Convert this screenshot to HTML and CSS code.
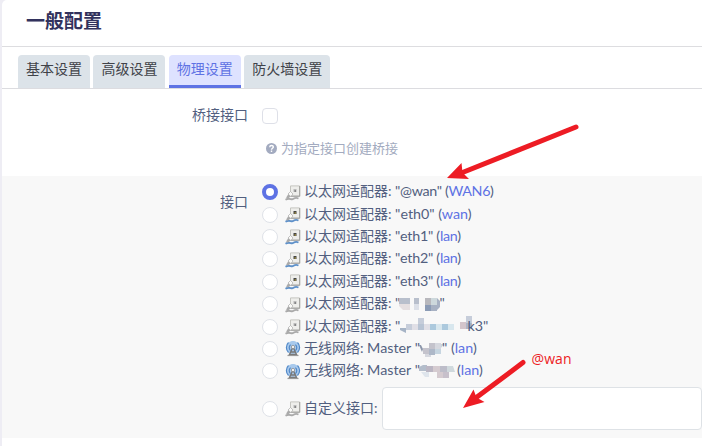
FILE: index.html
```
<!DOCTYPE html>
<html lang="zh-CN">
<head>
<meta charset="utf-8">
<title>一般配置</title>
<link rel="stylesheet" href="styles.css">
</head>
<body>
<svg width="0" height="0" class="defs">
  <symbol id="eth" viewBox="0 0 16 16">
    <path class="cable" d="M.5 14.800C5 12 6 15.500 8.500 13.800S12.500 13 13.500 13.500" fill="none" stroke-width="1.800"/>
    <path d="M5.500.9h9v10h-9z" fill="#eeeeeb" stroke="#c5c5c0"/>
    <path d="M14.800 1v10.300H6" fill="none" stroke="#999996" stroke-width=".9"/>
    <path d="M8.500 4h3v3h-3z" class="port"/>
    <path d="M9.500 5.500h1.500v1h-1.500z" class="pin"/>
    <path d="M5.500 6.500 8 9l-2.200 2.500L3 9z" fill="#fafaf8" stroke="#aaa" stroke-width=".7"/>
    <path d="M3.200 9.300 5.800 11.500 2.500 13.800 1.200 12.600z" fill="#aaa"/>
  </symbol>
  <symbol id="wifi" viewBox="0 0 16 16">
    <circle cx="8" cy="6.500" r="6.600" fill="#a8c9ec"/>
    <path d="M3.500 1.500a7 7 0 0 0 0 10M12.500 1.500a7 7 0 0 1 0 10M5.600 3.600a4 4 0 0 0 0 6M10.400 3.600a4 4 0 0 1 0 6" fill="none" stroke="#5289c8" stroke-width="1.200"/>
    <path d="M8 6 4 14.500M8 6l4 8.500M5.500 11h5M4.500 13.500h7" fill="none" stroke="#777" stroke-width="1.400"/>
    <path d="M2.500 14.500h11" stroke="#999" stroke-width="1.200"/>
    <circle cx="8" cy="6" r="1.700" fill="#eee" stroke="#777" stroke-width=".6"/>
  </symbol>
</svg>
<main class="card">
  <h1>一般配置</h1>
  <nav><a>基本设置</a><a>高级设置</a><a class="active">物理设置</a><a>防火墙设置</a></nav>
  <section class="bridge">
    <label>桥接接口</label>
    <div class="value">
      <span class="check"></span>
      <p class="hint"><svg width="11" height="11" viewBox="0 0 11 11"><circle cx="5.500" cy="5.500" r="5.500" fill="#a3abc0"/><path d="M3.700 4.200C3.800 1.800 7.400 2 7.300 4.100 7.200 5.200 5.500 5.300 5.500 6.700M5.500 7.500V9" fill="none" stroke="#fff" stroke-width="1.400"/></svg>为指定接口创建桥接</p>
    </div>
  </section>
  <section class="interfaces">
    <label>接口</label>
    <div class="list">
      <div class="row"><i class="radio on"></i><svg class="icon off"><use href="#eth"/></svg><span>以太网适配器: <b class="tight">"@wan" (<a>WAN6</a>)</b></span></div>
      <div class="row"><i class="radio"></i><svg class="icon"><use href="#eth"/></svg><span>以太网适配器: <b>"eth0" (<a>wan</a>)</b></span></div>
      <div class="row"><i class="radio"></i><svg class="icon"><use href="#eth"/></svg><span>以太网适配器: <b class="lan">"eth1" (<a>lan</a>)</b></span></div>
      <div class="row"><i class="radio"></i><svg class="icon"><use href="#eth"/></svg><span>以太网适配器: <b class="lan">"eth2" (<a>lan</a>)</b></span></div>
      <div class="row"><i class="radio"></i><svg class="icon"><use href="#eth"/></svg><span>以太网适配器: <b class="lan">"eth3" (<a>lan</a>)</b></span></div>
      <div class="row"><i class="radio"></i><svg class="icon off"><use href="#eth"/></svg><span>以太网适配器: <b>"</b></span><svg class="mosaic m0" width="41" height="14"><path fill="#e5dfe1" d="M0 0h11v12H4L0 8z"/><path fill="#b8bfcc" d="M0 0h11v6H0zM15 0h5v6h-5z"/><path fill="#dce0e8" d="M15 6h5v6h-5z"/><path fill="#b8b8bd" d="M26 0h6v7h-6z"/><path fill="#cdd8dc" d="M32 0h6v7h-6z"/><path fill="#8b9bb5" d="M26 7h6v6h-6z"/><path fill="#a7b1c3" d="M32 7h6v6h-6zM38 0l3 3v6l-3 3z"/></svg><b>"</b></div>
      <div class="row"><i class="radio"></i><svg class="icon off"><use href="#eth"/></svg><span>以太网适配器: <b>"</b></span><svg class="mosaic wide" width="75" height="17"><path fill="#a6b4c6" d="M0 12h6v5l-6-3z"/><path fill="#c6cdda" d="M6 8h6v6H6zM18 2h6v6h-6zM66 0h6v7h-6z"/><path fill="#e0dfe6" d="M12 8h6v6h-6zM24 8h6v6h-6z"/><path fill="#b8c4d4" d="M18 8h6v6h-6z"/><path fill="#acc9dd" d="M30 8h6v6h-6zM42 8h6v6h-6z"/><path fill="#d8e7ee" d="M36 8h6v6h-6zM48 8h6v6h-6z"/><path fill="#d3c5cb" d="M60 6h6v7h-6z"/><path fill="#acb4c6" d="M66 7h6v6h-6z"/></svg><b>k3"</b></div>
      <div class="row"><i class="radio"></i><svg class="icon"><use href="#wifi"/></svg><span>无线网络: <b class="master">Master "</b></span><svg class="mosaic m1" width="26" height="16"><path fill="#8c96aa" d="m0 4 3 7 1-3-2-4z"/><path fill="#c4c3cc" d="M4 7h6v6H4zM10 2h6v6h-6z"/><path fill="#d6d8df" d="M16 2h6v6h-6zM6 13h6v3H6z"/><path fill="#aeb8c8" d="M10 8h6v6h-6z"/><path fill="#c6d5e0" d="M16 8h6v5h-6zM22 3h3l-3 4z"/></svg><b>" (<a>lan</a>)</b></div>
      <div class="row"><i class="radio"></i><svg class="icon"><use href="#wifi"/></svg><span>无线网络: <b class="master">Master "</b></span><svg class="mosaic m2" width="36" height="14"><path fill="#b3bdcb" d="M0 2 4 0h4v6H0z"/><path fill="#dfe5ec" d="M2 7h8v5H6z"/><path fill="#bbb6c3" d="M7 1h7v6H7z"/><path fill="#d5cbd0" d="M14 1h7v6h-7zM18 7h6v6h-6z"/><path fill="#bdbdc9" d="M21 1h7v6h-7z"/><path fill="#d0d9dd" d="M28 1h6l2 6h-8z"/><path fill="#c7c0cb" d="M24 7h6v6h-6z"/></svg><b>(<a>lan</a>)</b></div>
      <div class="row custom"><i class="radio"></i><svg class="icon off"><use href="#eth"/></svg><span>自定义接口:</span><input type="text" aria-label="自定义接口"></div>
    </div>
  </section>
</main>
<svg class="notes" width="702" height="446" viewBox="0 0 702 446">
  <path d="M576 127 460 173.500M523 362.500 475 398.500" stroke="#ed1c24" stroke-width="5" stroke-linecap="round"/>
  <path d="m447 178 14.500-15 1 9.500 6.500 6.500zM463 408l10.500-18.500 3 8 8 4.500z" fill="#ed1c24"/>
  <text x="531.500" y="363.500" textLength="40">@wan</text>
</svg>
</body>
</html>
```
FILE: styles.css
```
* { box-sizing: border-box; }
body { margin: 0; width: 702px; height: 446px; overflow: hidden; background: #eeedf4; color: #525f7f; font: 14px/22px Lato, "Noto Sans CJK SC", sans-serif; }
.defs { display: block; }
.card { margin-left: 2px; height: 446px; background: #fff; border-radius: 5px 0 0; }
h1 { margin: 0; height: 47px; padding: 8px 24px 0; border-bottom: 1px solid #dddde0; color: #32325d; font: bold 19px/24px "Noto Sans CJK SC", sans-serif; }
nav { display: flex; height: 42px; padding: 8px 16px 0; gap: 3.400px; border-bottom: 1px solid #dcdce0; }
nav a { height: 33px; padding: 3px 8px 0; border-radius: 4px 4px 0 0; background: #dce3e9; color: #404248; }
nav a.active { background: #dee2ff; color: #5e72e4; border-bottom: 3px solid #5e72e4; border-radius: 4px 4px 0 0; }
section { display: flex; }
label { width: 246px; text-align: right; flex: none; }
.bridge { height: 87px; padding-top: 15px; }
.value { padding: 4px 0 0 14px; }
.check { display: block; width: 16px; height: 16px; border: 1px solid #dee0e8; border-radius: 4px; }
.hint { display: flex; align-items: center; gap: 4px; margin: 13px 0 0 4px; color: #a3abc0; font-size: 13px; line-height: 22px; }
.interfaces { height: 262px; background: #f8f8f8; padding-top: 4px; }
.interfaces label { padding-top: 11px; }
.list { flex: 1; padding-left: 14px; }
.row { display: flex; height: 22.400px; align-items: center; white-space: pre; }
.radio { width: 16px; height: 16px; margin: 2px 8px 0 0; flex: none; background: #fff; border: 1px solid #dfe2e8; border-radius: 50%; }
.radio.on { border: 4px solid #5e72e4; }
.icon { width: 16px; height: 16px; margin: 3px 3px 0 -1px; flex: none; color: #5f91c9; --port: #444; --pin: #d0b842; }
.icon.off { color: #aaa; --port: #bbb; --pin: #555; }
.cable { stroke: currentColor; }
.port { fill: var(--port); }
.pin { fill: var(--pin); }
b { font-weight: normal; font-size: 14.300px; }
.tight { letter-spacing: -.35px; }
.lan { letter-spacing: -.27px; }
.master { letter-spacing: 0; }
.row a { color: #5e72e4; }
.mosaic { flex: none; margin: 3px 0 0 -1px; }
.m0 { margin: 3px -1px 0 -1px; }
.wide { margin: -2px -8px 0 0; }
.m1 { margin-right: -3px; }
.m2 { margin-right: 2px; }
.custom { height: 44px; margin-top: 4px; }
.custom input { width: 320px; height: 43px; margin: 1px 0 0 4px; flex: none; border: 1px solid #dee2e6; border-radius: 4px; background: #fff; }
.notes { position: absolute; top: 0; left: 0; pointer-events: none; }
.notes text { fill: #ed1c24; font: 14px "Open Sans", sans-serif; }
```
